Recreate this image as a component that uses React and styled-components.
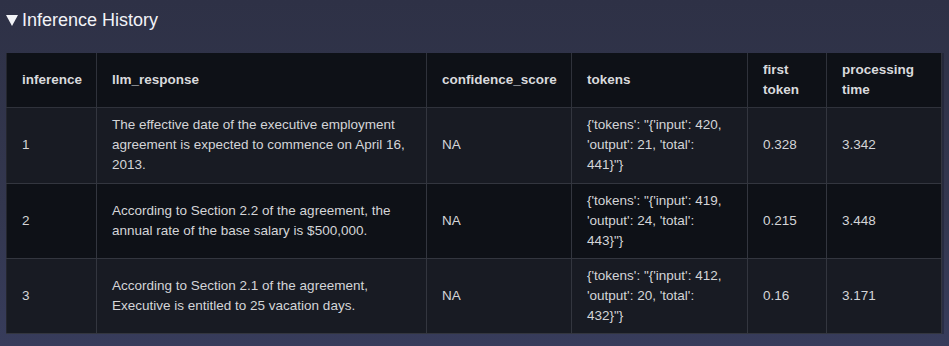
import React from "react";
import styled, { createGlobalStyle } from "styled-components";

const GlobalStyle = createGlobalStyle`
  html, body {
    margin: 0;
    padding: 0;
    height: 100%;
    background: #30344a;
  }
  body {
    font-family: "Liberation Sans", Arial, sans-serif;
  }
`;

const rows = [
  {
    id: 1,
    response:
      "The effective date of the executive employment agreement is expected to commence on April 16, 2013.",
    score: "NA",
    tokens: "{'tokens': \"{'input': 420, 'output': 21, 'total': 441}\"}",
    first: "0.328",
    time: "3.342"
  },
  {
    id: 2,
    response:
      "According to Section 2.2 of the agreement, the annual rate of the base salary is $500,000.",
    score: "NA",
    tokens: "{'tokens': \"{'input': 419, 'output': 24, 'total': 443}\"}",
    first: "0.215",
    time: "3.448"
  },
  {
    id: 3,
    response:
      "According to Section 2.1 of the agreement, Executive is entitled to 25 vacation days.",
    score: "NA",
    tokens: "{'tokens': \"{'input': 412, 'output': 20, 'total': 432}\"}",
    first: "0.16",
    time: "3.171"
  }
];

const App = () => {
  return (
    <React.Fragment>
      <GlobalStyle />
      <Page>
        <Title>
          <Arrow />
          <span>Inference History</span>
        </Title>

        <Frame>
          <Table>
            <colgroup>
              <col style={{ width: "90px" }} />
              <col style={{ width: "330px" }} />
              <col style={{ width: "145px" }} />
              <col style={{ width: "176px" }} />
              <col style={{ width: "79px" }} />
              <col style={{ width: "115px" }} />
            </colgroup>
            <thead>
              <HeadRow>
                <Th>inference</Th>
                <Th>llm_response</Th>
                <Th>confidence_score</Th>
                <Th>tokens</Th>
                <Th>first token</Th>
                <Th>processing time</Th>
              </HeadRow>
            </thead>
            <tbody>
              {rows.map((row, index) => {
                return (
                  <Tr key={row.id} $odd={index % 2 === 0} $tall={index === 0}>
                    <Td>{row.id}</Td>
                    <Td>{row.response}</Td>
                    <Td>{row.score}</Td>
                    <Td>{row.tokens}</Td>
                    <Td>{row.first}</Td>
                    <Td>{row.time}</Td>
                  </Tr>
                );
              })}
            </tbody>
          </Table>
        </Frame>
      </Page>
    </React.Fragment>
  );
};

const Page = styled.div`
  width: 949px;
  height: 346px;
  box-sizing: border-box;
  padding: 8px 8px 0 6px;
  background: linear-gradient(180deg, #2e3146 0%, #33374f 60%, #373c5b 100%);
`;

const Title = styled.div`
  display: flex;
  align-items: center;
  gap: 4px;
  height: 24px;
  margin-bottom: 21px;
  color: #f2f3f7;
  font-size: 18px;
  line-height: 24px;
`;

const Arrow = styled.span`
  width: 0;
  height: 0;
  margin-top: 1px;
  border-left: 6px solid transparent;
  border-right: 6px solid transparent;
  border-top: 11px solid #f2f3f7;
`;

const Frame = styled.div`
  width: 935px;
  box-shadow: 3px 0 0 rgba(20, 22, 34, 0.35);
`;

const Table = styled.table`
  width: 935px;
  border-collapse: collapse;
  table-layout: fixed;
  font-size: 13.5px;
  line-height: 20px;
  color: #d4d5d8;
`;

const HeadRow = styled.tr`
  height: 54px;
  background: #0e1117;
`;

const Th = styled.th`
  padding: 6px 15px;
  text-align: left;
  vertical-align: middle;
  font-weight: bold;
  color: #d9dadd;
  border: 1px solid #2f323b;
  border-top: none;
  &:first-child {
    border-left-color: #24262e;
  }
`;

const Tr = styled.tr`
  height: ${props => (props.$tall ? "76px" : "75px")};
  background: ${props => (props.$odd ? "#181b23" : "#0e1117")};
`;

const Td = styled.td`
  padding: 7px 15px;
  text-align: left;
  vertical-align: middle;
  border: 1px solid #33363f;
  &:first-child {
    border-left-color: #24262e;
  }
`;

export default App;
